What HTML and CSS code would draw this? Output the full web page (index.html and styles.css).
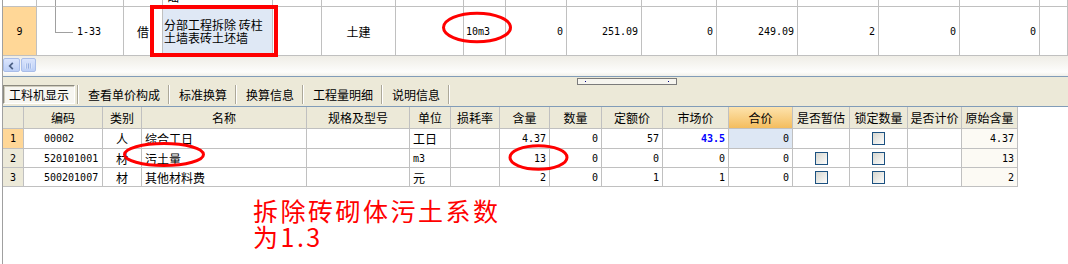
FILE: index.html
```html
<!DOCTYPE html>
<html lang="zh-CN">

<head>
    <meta charset="UTF-8">
    <title>定额换算</title>
    <link rel="stylesheet" href="styles.css">
</head>

<body>

    <div class="app">
        <!-- 上部: 分部分项 -->
        <div class="top-grid">
            <div class="trow partial">
                <div class="cell"></div>
                <div class="cell tree-up"></div>
                <div class="cell"></div>
                <div class="cell cut"><span>础</span></div>
                <div class="cell"></div>
                <div class="cell"></div>
                <div class="cell"></div>
                <div class="cell"></div>
                <div class="cell"></div>
                <div class="cell"></div>
                <div class="cell"></div>
                <div class="cell"></div>
                <div class="cell"></div>
                <div class="cell"></div>
                <div class="cell"></div>
                <div class="cell"></div>
            </div>
            <div class="trow main">
                <div class="cell rh cur mono">9</div>
                <div class="cell tree-node mono"><span>1-33</span></div>
                <div class="cell center">借</div>
                <div class="cell name"><span>分部工程拆除 砖柱<br>土墙表砖土坯墙</span></div>
                <div class="cell"></div>
                <div class="cell center">土建</div>
                <div class="cell"></div>
                <div class="cell unit mono">10m3</div>
                <div class="cell num">0</div>
                <div class="cell num">251.09</div>
                <div class="cell num">0</div>
                <div class="cell num">249.09</div>
                <div class="cell num">2</div>
                <div class="cell num">0</div>
                <div class="cell num">0</div>
                <div class="cell"></div>
            </div>
        </div>

        <div class="hscroll">
            <span class="sb-btn">
                <svg width="17" height="14" viewBox="0 0 17 14">
                    <path d="M10 3.5 L6.5 7 L10 10.5" fill="none" stroke="#4d6185" stroke-width="2"/>
                </svg>
            </span>
            <span class="sb-btn thumb">
                <svg width="15" height="14" viewBox="0 0 15 14">
                    <path d="M4.5 4v6M6.5 4v6M8.5 4v6M10.5 4v6" stroke="#eef3fd" stroke-width="1"/>
                    <path d="M5.5 4v6M7.5 4v6M9.5 4v6" stroke="#8ca6dc" stroke-width="1"/>
                </svg>
            </span>
        </div>

        <!-- 下部: 工料机 -->
        <div class="bottom-pane">
            <div class="splitter"><span class="grip"><i></i><i></i></span></div>

            <div class="tabs">
                <span class="tab active">工料机显示</span>
                <span class="sep"></span>
                <span class="tab">查看单价构成</span>
                <span class="sep"></span>
                <span class="tab">标准换算</span>
                <span class="sep"></span>
                <span class="tab">换算信息</span>
                <span class="sep"></span>
                <span class="tab">工程量明细</span>
                <span class="sep"></span>
                <span class="tab">说明信息</span>
                <span class="sep"></span>
            </div>
        </div>

        <div class="detail">
            <div class="drow head">
                <div class="cell"></div>
                <div class="cell center">编码</div>
                <div class="cell center">类别</div>
                <div class="cell center">名称</div>
                <div class="cell center">规格及型号</div>
                <div class="cell center">单位</div>
                <div class="cell center">损耗率</div>
                <div class="cell center">含量</div>
                <div class="cell center">数量</div>
                <div class="cell center">定额价</div>
                <div class="cell center">市场价</div>
                <div class="cell center hot">合价</div>
                <div class="cell center">是否暂估</div>
                <div class="cell center">锁定数量</div>
                <div class="cell center">是否计价</div>
                <div class="cell center">原始含量</div>
            </div>
            <div class="drow first">
                <div class="cell rh cur mono">1</div>
                <div class="cell code mono">00002</div>
                <div class="cell center">人</div>
                <div class="cell">综合工日</div>
                <div class="cell"></div>
                <div class="cell">工日</div>
                <div class="cell"></div>
                <div class="cell num">4.37</div>
                <div class="cell num">0</div>
                <div class="cell num">57</div>
                <div class="cell num price">43.5</div>
                <div class="cell num focus">0</div>
                <div class="cell"></div>
                <div class="cell center"><span class="check"></span></div>
                <div class="cell"></div>
                <div class="cell num orig">4.37</div>
            </div>
            <div class="drow">
                <div class="cell rh mono">2</div>
                <div class="cell code mono">520101001</div>
                <div class="cell center">材</div>
                <div class="cell">污土量</div>
                <div class="cell"></div>
                <div class="cell mono">m3</div>
                <div class="cell"></div>
                <div class="cell num">13</div>
                <div class="cell num">0</div>
                <div class="cell num">0</div>
                <div class="cell num">0</div>
                <div class="cell num">0</div>
                <div class="cell center"><span class="check"></span></div>
                <div class="cell center"><span class="check"></span></div>
                <div class="cell"></div>
                <div class="cell num orig">13</div>
            </div>
            <div class="drow">
                <div class="cell rh mono">3</div>
                <div class="cell code mono">500201007</div>
                <div class="cell center">材</div>
                <div class="cell">其他材料费</div>
                <div class="cell"></div>
                <div class="cell">元</div>
                <div class="cell"></div>
                <div class="cell num">2</div>
                <div class="cell num">0</div>
                <div class="cell num">1</div>
                <div class="cell num">1</div>
                <div class="cell num">0</div>
                <div class="cell center"><span class="check"></span></div>
                <div class="cell center"><span class="check"></span></div>
                <div class="cell"></div>
                <div class="cell num orig">2</div>
            </div>
        </div>

        <div class="note">拆除砖砌体污土系数<br>为1.3</div>
    </div>

    <!-- 红色批注 -->
    <svg class="marks" width="1068" height="264" viewBox="0 0 1068 264">
        <rect x="152" y="7" width="124" height="48" fill="none" stroke="#ff0000" stroke-width="4"/>
        <ellipse cx="477" cy="27.5" rx="33.5" ry="14.3" fill="none" stroke="#ff0000" stroke-width="3"/>
        <ellipse cx="164" cy="154.5" rx="39.5" ry="11" fill="none" stroke="#ff0000" stroke-width="3"/>
        <ellipse cx="538.5" cy="157.5" rx="28.5" ry="11.7" fill="none" stroke="#ff0000" stroke-width="3"/>
    </svg>

</body>

</html>
```

FILE: styles.css
```css
/* Reset */
* {
    box-sizing: border-box;
    margin: 0;
    padding: 0;
}

body {
    position: relative;
    width: 1068px;
    height: 264px;
    overflow: hidden;
    background: #fff;
    font-family: "Noto Sans CJK SC", sans-serif;
    font-size: 12px;
    color: #000;
}

.app {
    margin-left: 2px;
    height: 264px;
    border-left: 1px solid #a0a0a0;
}

/* Generic grid cell */
.cell {
    display: flex;
    align-items: center;
    padding: 0 3px;
    border-right: 1px solid #c0c0c0;
    white-space: nowrap;
    overflow: hidden;
    line-height: 13px;
}

.center {
    justify-content: center;
}

/* Half-width digits, like the old grid font */
.num,
.mono {
    font-family: "DejaVu Sans Mono", monospace;
    font-size: 10px;
}

.num {
    justify-content: flex-end;
}

.rh {
    justify-content: center;
}

.cur {
    background: #ffd797;
}

/* Top grid */
.trow {
    display: grid;
    grid-template-columns: 34px 87px 39px 110px 49px 74px 68px 42px 61px 75px 75px 81px 81px 81px 80px 1fr;
    border-bottom: 1px solid #c0c0c0;
}

.trow.partial {
    height: 7px;
}

.trow.main {
    height: 49px;
}

.cut span {
    margin-top: -14px;
    padding-left: 1px;
}

.tree-up,
.tree-node {
    position: relative;
}

.tree-up::before {
    content: "";
    position: absolute;
    left: 18px;
    top: 0;
    bottom: 0;
    border-left: 1px solid #a0a0a0;
}

.tree-node::before {
    content: "";
    position: absolute;
    left: 18px;
    top: 0;
    width: 17px;
    height: 25px;
    border-left: 1px solid #a0a0a0;
    border-bottom: 1px solid #a0a0a0;
}

.tree-node span {
    padding-left: 37px;
}

.name {
    background: #dfe8f5;
    padding-left: 1px;
    white-space: normal;
}

.unit {
    padding-left: 2px;
}

/* Horizontal scroll bar */
.hscroll {
    display: flex;
    gap: 1px;
    height: 20px;
    padding-top: 2px;
    background: linear-gradient(#efede6, #fdfdfc 80%, #f1f0ea);
}

.sb-btn {
    display: flex;
    width: 17px;
    height: 14px;
    border: 1px solid #a9bde8;
    border-radius: 2px;
    background: linear-gradient(#dbe5fc, #bccff6);
}

.sb-btn.thumb {
    width: 15px;
}

/* Beige pane with splitter and tabs */
.bottom-pane {
    height: 30px;
    border-top: 1px solid #819cb8;
    background: #ece9d8;
}

.splitter {
    height: 8px;
    padding-top: 1px;
}

.grip {
    display: flex;
    justify-content: space-between;
    align-items: center;
    width: 100px;
    height: 7px;
    margin-left: 574px;
    padding: 0 7px;
    border: 1px solid #7b7b7b;
    background: #f6f5ef;
}

.grip i {
    width: 1px;
    height: 1px;
    background: #000080;
}

.tabs {
    display: flex;
    height: 19px;
}

.tab {
    display: flex;
    align-items: center;
    padding: 0 8px 0 9px;
    line-height: 13px;
}

.tab.active {
    padding: 0 5px;
    margin-right: 2px;
    border: 1px solid;
    border-color: #8c8a80 #fff #fff #8c8a80;
    background: #f7f6f1;
    box-shadow: inset 1px 1px 0 #cfccbd;
}

.sep {
    width: 2px;
    border-left: 1px solid #aca899;
    border-right: 1px solid #fff;
}

/* Detail grid */
.detail {
    border-top: 1px solid #819cb8;
}

.drow {
    display: grid;
    grid-template-columns: 21px 79px 39px 165px 103px 41px 49px 50px 52px 61px 66px 64px 57px 58px 54px 56px;
    width: 1015px;
    height: 19px;
    border-bottom: 1px solid #c0c0c0;
}

.drow.head {
    height: 22px;
    background: #ece9d8;
}

.drow.first {
    height: 20px;
}

.drow .rh {
    background: #ece9d8;
}

.drow .rh.cur {
    background: #ffd797;
}

.hot {
    background: linear-gradient(#fde3ad, #f4bd5e);
}

.code {
    padding-left: 20px;
}

.price {
    color: #0000ff;
    font-weight: bold;
}

.focus {
    background: #dde7f4;
}

.orig {
    background: #fcfaf4;
}

.check {
    width: 13px;
    height: 13px;
    border: 1px solid #1c5180;
    background: linear-gradient(135deg, #d6d6cf, #fdfdfc);
}

/* Red handwritten note */
.note {
    margin: 10px 0 0 250px;
    color: #ff0000;
    font-size: 25px;
    line-height: 26px;
    letter-spacing: 2.5px;
}

.marks {
    position: absolute;
    left: 0;
    top: 0;
    pointer-events: none;
}
```
